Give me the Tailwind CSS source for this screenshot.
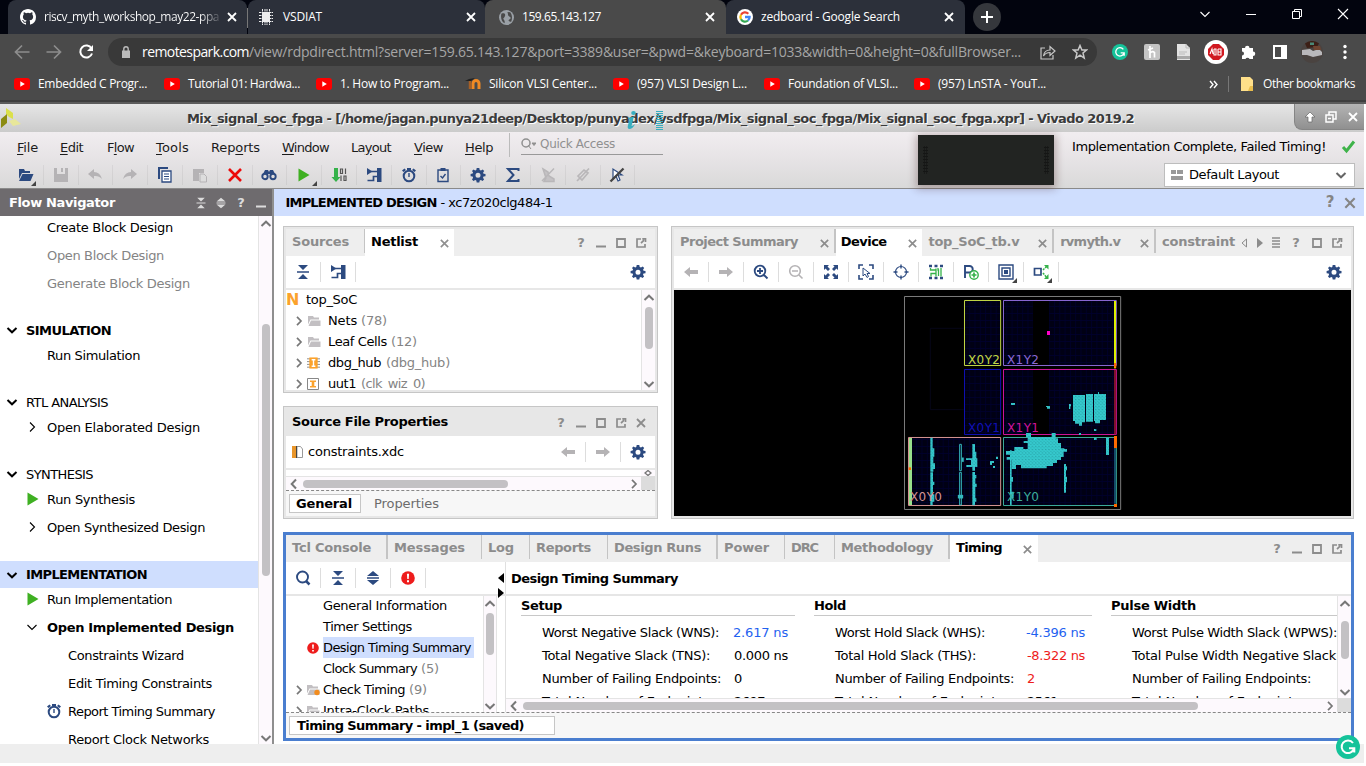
<!DOCTYPE html>
<html lang="en">
<head>
<meta charset="utf-8">
<title>Vivado 2019.2</title>
<script src="https://cdn.jsdelivr.net/npm/@tailwindcss/browser@4"></script>
</head>
<body class="w-[1366px] h-[766px] overflow-hidden bg-white font-['DejaVu_Sans',sans-serif] text-[13px] text-black whitespace-nowrap leading-none">

<svg class="hidden">
  <symbol id="x" viewBox="0 0 12 12"><path d="M2 2L10 10M10 2L2 10" fill="none" stroke="currentColor" stroke-width="1.8"/></symbol>
  <symbol id="min" viewBox="0 0 12 12"><path d="M1 9.500H11" stroke="currentColor" stroke-width="2"/></symbol>
  <symbol id="max" viewBox="0 0 12 12"><path d="M2 2H10V10H2z" fill="none" stroke="currentColor" stroke-width="1.8"/></symbol>
  <symbol id="float" viewBox="0 0 12 12"><path d="M6 2H2V10H10V7M6 6.2L9 3.200M7.300 1.800H10.500V5" fill="none" stroke="currentColor" stroke-width="1.700"/></symbol>
  <symbol id="dn" viewBox="0 0 12 12"><path d="M1.500 4L6 8.300L10.500 4" fill="none" stroke="currentColor" stroke-width="2"/></symbol>
  <symbol id="up" viewBox="0 0 12 12"><path d="M1.500 8L6 3.700L10.500 8" fill="none" stroke="currentColor" stroke-width="2"/></symbol>
  <symbol id="lt" viewBox="0 0 12 12"><path d="M8 1.500L3.700 6L8 10.500" fill="none" stroke="currentColor" stroke-width="2"/></symbol>
  <symbol id="rt" viewBox="0 0 12 12"><path d="M4 1.800L8 6L4 10.200" fill="none" stroke="currentColor" stroke-width="1.700"/></symbol>
  <symbol id="rt1" viewBox="0 0 12 12"><path d="M4 1.500L8.500 6L4 10.500" fill="none" stroke="currentColor" stroke-width="1.100"/></symbol>
  <symbol id="dn1" viewBox="0 0 12 12"><path d="M1.500 4L6 8.500L10.500 4" fill="none" stroke="currentColor" stroke-width="1.100"/></symbol>
  <symbol id="collapse" viewBox="0 0 16 16"><path d="M3 1H13L8 6zM2 7.200H14V8.800H2zM8 10L13 15H3z" fill="currentColor"/></symbol>
  <symbol id="expand" viewBox="0 0 16 16"><path d="M8 1L14 6H2zM2 7.200H14V8.800H2zM2 10H14L8 15z" fill="currentColor"/></symbol>
  <symbol id="gear" viewBox="0 0 16 16"><path fill="currentColor" fill-rule="evenodd" d="M6.700 1H9.300L9.700 3L11 3.500L12.700 2.400L14.200 4L13.100 5.600L13.500 6.700L15.500 7V9.200L13.500 9.600L13 10.800L14.100 12.500L12.500 14L10.900 12.900L9.700 13.400L9.300 15.400H6.700L6.300 13.400L5.200 12.900L3.500 14L2 12.500L3.100 10.800L2.600 9.600L.6 9.200V7L2.600 6.600L3.100 5.500L2 3.900L3.500 2.400L5.200 3.500L6.300 3zM8 5.700A2.500 2.500 0 1 0 8 10.700A2.500 2.500 0 1 0 8 5.700z"/></symbol>
  <symbol id="play" viewBox="0 0 12 14"><path d="M.5.500L11.500 7L.5 13.500z" fill="#3fb022"/></symbol>
  <symbol id="clock" viewBox="0 0 16 16"><circle cx="8" cy="9" r="5.300" fill="none" stroke="currentColor" stroke-width="2"/><path d="M6 1H10V3H6zM1 3.500L3.500 1.500L5 3L2.500 5zM15 3.500L12.500 1.500L11 3L13.500 5zM7.300 6H8.700V10H7.300z" fill="currentColor"/></symbol>
  <symbol id="sch" viewBox="0 0 16 16"><path d="M1 1L6.500 4.500L1 8zM11 1H15.500V15H11z" fill="currentColor"/><path d="M5 4.500H12M12 9.500H7.500V13.500H1.500" fill="none" stroke="currentColor" stroke-width="1.700"/></symbol>
  <symbol id="aL" viewBox="0 0 16 16"><path d="M1 8L7 3V6H15V10H7V13z" fill="currentColor"/></symbol>
  <symbol id="aR" viewBox="0 0 16 16"><path d="M15 8L9 3V6H1V10H9V13z" fill="currentColor"/></symbol>
  <symbol id="folder" viewBox="0 0 14 12"><path d="M1 1H6L7 2.500H12V4.500H3.500L1 9.500zM4 5.500H13.500V11H1.500z" fill="#c2bfc2"/></symbol>
  <symbol id="err" viewBox="0 0 14 14"><circle cx="7" cy="7" r="6.800" fill="#ee1c1c"/><path d="M5.900 2.800H8.100L7.700 8H6.300zM6 9.200H8V11.200H6z" fill="#fff"/></symbol>
  <symbol id="yt" viewBox="0 0 16 12"><rect width="16" height="12" rx="3" fill="#f00"/><path d="M6.300 3.300V8.700L10.800 6z" fill="#fff"/></symbol>
  <symbol id="dl" viewBox="0 0 6 6"><path d="M6 0V6H0z" fill="#444"/></symbol>
  <symbol id="g" viewBox="0 0 24 24"><circle cx="12" cy="12" r="12" fill="#15c39a"/><path d="M17 8A6.300 6.300 0 1 0 18 13.500M13 13.200H18.300V17.500" fill="none" stroke="#fff" stroke-width="2"/></symbol>
</svg>

<!-- browser chrome -->
<header class="font-['Open_Sans','Noto_Sans',sans-serif] text-white w-full h-[104px] flex flex-col bg-[#4a4a4a]">
  <div class="h-[34px] flex bg-[#02040e] text-[12px]">
    <div class="ml-2 w-[239px] h-[34px] rounded-t-lg bg-[#2c303a] flex items-center">
      <svg class="ml-[12px] w-4 h-4" viewBox="0 0 16 16"><path fill="#fff" d="M8 0C3.580 0 0 3.580 0 8c0 3.540 2.290 6.530 5.470 7.590.4.070.55-.17.55-.38v-1.490c-2.010.37-2.530-.49-2.690-.94-.09-.23-.48-.94-.82-1.130-.28-.15-.68-.52-.01-.53.63-.01 1.080.58 1.230.82.720 1.210 1.870.87 2.330.66.070-.52.280-.87.510-1.070-1.780-.2-3.640-.89-3.640-3.950 0-.87.310-1.590.82-2.150-.08-.2-.36-1.020.08-2.120 0 0 .67-.21 2.200.82a7.600 7.600 0 0 1 4 0c1.530-1.040 2.200-.82 2.200-.82.440 1.100.160 1.920.080 2.120.51.560.82 1.270.82 2.150 0 3.070-1.870 3.750-3.650 3.950.290.250.540.730.540 1.480v2.200c0 .21.150.460.550.38A8 8 0 0 0 16 8c0-4.420-3.580-8-8-8z"/></svg>
      <div class="ml-2 w-[177px] overflow-hidden h-5 leading-5 bg-linear-to-r from-white from-88% to-white/10 bg-clip-text text-transparent"><span data-w="175">riscv_myth_workshop_may22-ppa</span></div>
      <svg class="ml-[5px] w-3 h-3"><use href="#x"/></svg>
    </div>
    <div class="w-px h-[20px] mt-2 bg-[#777]"></div>
    <div class="w-[237px] h-[34px] rounded-t-lg bg-[#2c303a] flex items-center">
      <svg class="ml-[10px] w-4 h-4" viewBox="0 0 16 16" fill="#eee"><path d="M4 3H12V13H4z"/><path d="M1 3.500H15M1 6.500H15M1 9.500H15M1 12.500H15M4.500 0V16M7 0V16M9 0V16M11.500 0V16" stroke="#eee" stroke-width="1" stroke-dasharray="2 .5"/></svg>
      <span class="ml-[9px]" data-w="39">VSDIAT</span>
      <svg class="ml-auto mr-2 w-3 h-3"><use href="#x"/></svg>
    </div>
    <div class="w-[241px] h-[34px] rounded-t-lg bg-[#4a4a4a] flex items-center">
      <svg class="ml-[14px] w-[15px] h-[15px]" viewBox="0 0 16 16"><circle cx="8" cy="8" r="8" fill="#9aa0a6"/><path d="M2.500 4C5 3 7 3.500 6.500 6S3.500 8.500 5 10S6 13 6 14C3 13 1.500 9 2.500 4zM9 2C10 4 9 6 11 7S13 9 11 10S11 13 13 12.500C14.500 9 14 5 12 2.500z" fill="#4a4a4a"/></svg>
      <span class="ml-2" data-w="79">159.65.143.127</span>
      <svg class="ml-auto mr-[10px] w-3 h-3"><use href="#x"/></svg>
    </div>
    <div class="w-[239px] h-[34px] rounded-t-lg bg-[#2c303a] flex items-center">
      <svg class="ml-[11px] w-4 h-4" viewBox="0 0 16 16"><circle cx="8" cy="8" r="8" fill="#fff"/><g fill="none" stroke-width="2.300"><path d="M11.300 4.700A4.600 4.600 0 0 0 4 5.700" stroke="#ea4335"/><path d="M4 5.700A4.600 4.600 0 0 0 4 10.300" stroke="#fbbc05"/><path d="M4 10.300A4.600 4.600 0 0 0 11 11.500" stroke="#34a853"/><path d="M11 11.500A4.600 4.600 0 0 0 12.600 8H8" stroke="#4285f4"/></g></svg>
      <span class="ml-2" data-w="139">zedboard - Google Search</span>
      <svg class="ml-auto mr-[10px] w-3 h-3"><use href="#x"/></svg>
    </div>
    <div class="ml-2 mt-[3px] w-7 h-7 rounded-full bg-[#35373c] flex items-center justify-center"><svg class="w-3.5 h-3.5" viewBox="0 0 14 14"><path d="M7 1V13M1 7H13" stroke="#fff" stroke-width="2"/></svg></div>
    <div class="ml-auto flex h-7 items-center">
      <div class="w-[46px] flex justify-center"><svg class="w-3 h-3"><use href="#dn1"/></svg></div>
      <div class="w-[46px] flex justify-center"><svg class="w-3 h-3" viewBox="0 0 12 12"><path d="M1 6.500H11" stroke="#fff"/></svg></div>
      <div class="w-[46px] flex justify-center"><svg class="w-3 h-3" viewBox="0 0 12 12"><path d="M1.500 3.500H8.500V10.500H1.500zM3.500 3.500V1.500H10.500V8.500H8.500" fill="none" stroke="#fff"/></svg></div>
      <div class="w-[46px] flex justify-center"><svg class="w-3 h-3" viewBox="0 0 12 12"><path d="M1 1L11 11M11 1L1 11" stroke="#fff" stroke-width="1.100"/></svg></div>
    </div>
  </div>
  <div class="h-[36px] flex items-center">
    <svg class="ml-[14px] w-4 h-4 text-[#8d8d8d]" viewBox="0 0 16 16"><path d="M15.500 8H2M8 1.500L1.500 8L8 14.500" fill="none" stroke="currentColor" stroke-width="1.700"/></svg>
    <svg class="ml-4 w-4 h-4 text-[#8d8d8d]" viewBox="0 0 16 16"><path d="M.5 8H14M8 1.500L14.500 8L8 14.500" fill="none" stroke="currentColor" stroke-width="1.700"/></svg>
    <svg class="ml-4 w-4 h-4" viewBox="0 0 16 16"><path d="M13.500 4.500A6 6 0 1 0 14 9.500" fill="none" stroke="#fff" stroke-width="2"/><path d="M15 1V7H9z" fill="#fff"/></svg>
    <div class="ml-[14px] w-[989px] h-7 rounded-full bg-[#393939] flex items-center text-[14px]">
      <svg class="ml-[13px] w-[10px] h-3" viewBox="0 0 10 12"><path d="M1 4.500H9V12H1z" fill="#bbb"/><path d="M2.800 5V3A2.200 2.200 0 0 1 7.200 3V5" fill="none" stroke="#bbb" stroke-width="1.400"/></svg>
      <span class="ml-[11px]" data-w="107">remotespark.com</span><span class="text-[#a6a6a6]" data-w="772">/view/rdpdirect.html?server=159.65.143.127&amp;port=3389&amp;user=&amp;pwd=&amp;keyboard=1033&amp;width=0&amp;height=0&amp;fullBrowser...</span>
      <svg class="ml-[19px] w-4 h-4" viewBox="0 0 16 16"><path d="M5 4H1V15H13V11M3.500 12C4 8 6.500 6 10 6V2.500L15 7L10 11.500V8.500C7 8.500 5 9.500 3.500 12z" fill="none" stroke="#c8c8c8" stroke-width="1.200"/></svg>
      <svg class="ml-4 w-4 h-4" viewBox="0 0 16 16"><path d="M8 1.500L9.900 6H14.500L11 9L12.200 14L8 11.200L3.800 14L5 9L1.500 6H6.100z" fill="none" stroke="#c8c8c8" stroke-width="1.500"/></svg>
    </div>
    <svg class="ml-[15px] w-4 h-4"><use href="#g"/></svg>
    <svg class="ml-4 w-4 h-4" viewBox="0 0 16 16"><rect width="16" height="16" rx="2" fill="#c4c4c4"/><path d="M6 2V14M6 9Q8.500 6.500 10.500 8.500V13.500M4 6L9 4" fill="none" stroke="#fff" stroke-width="1.700"/></svg>
    <svg class="ml-4 w-[14px] h-4" viewBox="0 0 14 16"><path d="M1 0H10L14 4V16H1z" fill="#e3e3e3"/><path d="M1 12H14V15H1z" fill="#a9a9a9"/><path d="M10 0V4H14M3 8H11M3 10H9" stroke="#bbb" fill="none"/></svg>
    <div class="ml-[14px] w-6 h-6 rounded-full bg-white flex items-center justify-center"><svg class="w-4 h-4" viewBox="0 0 16 16"><path d="M5 0H11L16 5V11L11 16H5L0 11V5z" fill="#d01820"/><path d="M2 10L4 5L5 10M6 5V11H8V5H6M10 5V11H13V8H10M10 5H13V8" fill="none" stroke="#fff" stroke-width="1.100"/></svg></div>
    <svg class="ml-[12px] w-4 h-4" viewBox="0 0 16 16"><path d="M2 4H5A2.200 2.200 0 0 1 9.500 4H13V7.500A2.200 2.200 0 0 1 13 12V15H9.500A2.200 2.200 0 0 0 5.500 15H2V11.500A2 2 0 0 0 2 7.500z" fill="#fff"/></svg>
    <svg class="ml-4 w-4 h-4" viewBox="0 0 16 16"><path d="M2 2H14V14H2z" fill="none" stroke="#fff" stroke-width="2"/><path d="M9 2H14V14H9z" fill="#fff"/></svg>
    <svg class="ml-[13px] w-[22px] h-[22px]" viewBox="0 0 22 22"><circle cx="11" cy="11" r="11" fill="#4a4340"/><path d="M4 2.500A11 11 0 0 1 18 2.500L16 6L6 7z" fill="#3c1f16"/><path d="M9 1.500H13V4H9z" fill="#4a8a78"/><path d="M1 9L9 8L12 10L18 8L21 11V14L12 16L6 14L1 14z" fill="#b9b8bb"/><path d="M12 5L19 5L20 9L13 9z" fill="#6f4531"/></svg>
    <svg class="ml-[14px] w-4 h-4" viewBox="0 0 16 16" fill="#fff"><circle cx="8" cy="2.500" r="1.700"/><circle cx="8" cy="8" r="1.700"/><circle cx="8" cy="13.500" r="1.700"/></svg>
  </div>
  <div class="h-[32px] pb-[2px] flex items-center text-[12px] border-b-2 border-[#3e3e3e]">
    <div class="ml-[14px] w-[150px] flex items-center gap-2"><svg class="w-4 h-3"><use href="#yt"/></svg><span data-w="109">Embedded C Progr...</span></div>
    <div class="w-[152px] flex items-center gap-2"><svg class="w-4 h-3"><use href="#yt"/></svg><span data-w="112">Tutorial 01: Hardwa...</span></div>
    <div class="w-[149px] flex items-center gap-2"><svg class="w-4 h-3"><use href="#yt"/></svg><span data-w="109">1. How to Program...</span></div>
    <div class="w-[148px] flex items-center gap-2"><svg class="w-4 h-4" viewBox="0 0 16 16"><path d="M8 13V7.500A2.500 2.500 0 0 1 14 7.500V13" fill="none" stroke="#f08a24" stroke-width="3"/><path d="M5 5V13" stroke="#a65f25" stroke-width="2.500"/><path d="M0 5L4 3L10 2L6 5z" fill="#222"/></svg><span data-w="108">Silicon VLSI Center...</span></div>
    <div class="w-[151px] flex items-center gap-2"><svg class="w-4 h-3"><use href="#yt"/></svg><span data-w="110">(957) VLSI Design L...</span></div>
    <div class="w-[150px] flex items-center gap-2"><svg class="w-4 h-3"><use href="#yt"/></svg><span data-w="110">Foundation of VLSI...</span></div>
    <div class="flex items-center gap-2"><svg class="w-4 h-3"><use href="#yt"/></svg><span data-w="108">(957) LnSTA - YouT...</span></div>
    <svg class="ml-auto w-[9px] h-[9px]" viewBox="0 0 9 9"><path d="M1 1L4 4.500L1 8M5 1L8 4.500L5 8" fill="none" stroke="#fff" stroke-width="1.400"/></svg>
    <div class="ml-[10px] w-px h-4 bg-[#777]"></div>
    <svg class="ml-[12px] w-3 h-[14px]" viewBox="0 0 12 14"><path d="M0 0H9L12 3V14H0z" fill="#ffe08a"/><path d="M9 9H12V14H7z" fill="#e9bd4c"/></svg>
    <span class="ml-[10px] mr-[11px]" data-w="92">Other bookmarks</span>
  </div>
  <div class="h-[2px] bg-[#5c5c5c]"></div>
</header>

<div class="w-[1364px]">
  <!-- window title -->
  <div class="h-7 flex bg-linear-to-b from-[#e6e6e6] to-[#cbcbcb]">
    <svg class="mt-[3px] w-[22px] h-[22px]" viewBox="0 0 22 22"><path d="M6 1L13 6V12L9 10L6 7z" fill="#dbe04c"/><path d="M1 12L7 7V16L1 21z" fill="#8b8b12"/><path d="M9 14L15 12L21 17L13 19z" fill="#e8e79a"/></svg>
    <div class="ml-[165px] w-[1107px] leading-[29px] font-bold text-[#3b3b3b] [text-shadow:1px_1px_0_#fff] relative"><span data-w="947">Mix_signal_soc_fpga - [/home/jagan.punya21deep/Desktop/punyadex/vsdfpga/Mix_signal_soc_fpga/Mix_signal_soc_fpga.xpr] - Vivado 2019.2</span>
      <svg class="absolute left-[438px] top-[6px] w-4 h-5" viewBox="0 0 16 20"><ellipse cx="8.500" cy="3" rx="2.300" ry="2" fill="#38aebf"/><path d="M3 8L9 6.500L6.500 16Q8 16 10 14Q8 19 4 19Q2 18.500 3 15L4.500 9.500z" fill="#38aebf"/></svg>
      <svg class="absolute left-[469px] top-[7px] w-[7px] h-[19px]" viewBox="0 0 7 19"><path d="M3.500 0V19" stroke="#38aebf" stroke-width="7" stroke-dasharray="1 1"/></svg>
    </div>
    <div class="w-[70px] h-[26px] rounded-bl-lg bg-linear-to-b from-[#b4b4b4] to-[#909090] border-b border-l border-[#858585] flex items-center justify-around pl-1 text-white">
      <svg class="w-3 h-3" viewBox="0 0 12 12"><path d="M6 1L11 6H8V11H4V6H1z" fill="#fff" stroke="#666" stroke-width=".7"/></svg>
      <svg class="w-3 h-3" viewBox="0 0 12 12"><path d="M1 4H8V11H1zM4 4V1H11V8H8M3 7.500H6" fill="none" stroke="#fff" stroke-width="1.500"/></svg>
      <svg class="w-3 h-3"><use href="#x"/></svg>
    </div>
  </div>

  <!-- menu and toolbar -->
  <div class="relative h-[57px] flex bg-linear-to-b from-[#f1edf0] via-[#e6e3e5] to-[#d9d9d9] border-b border-[#8a8a8a]">
    <div class="w-[918px]">
      <div class="h-[30px] flex items-center text-[#1c1c1c] underline-offset-2">
        <div class="ml-[17px] w-[43px]"><span data-w="21"><u>F</u>ile</span></div>
        <div class="w-[47px]"><span data-w="23"><u>E</u>dit</span></div>
        <div class="w-[49px]"><span data-w="27">F<u>l</u>ow</span></div>
        <div class="w-[55px]"><span data-w="33"><u>T</u>ools</span></div>
        <div class="w-[71px]"><span data-w="49">Rep<u>o</u>rts</span></div>
        <div class="w-[69px]"><span data-w="47"><u>W</u>indow</span></div>
        <div class="w-[63px]"><span data-w="40">La<u>y</u>out</span></div>
        <div class="w-[51px]"><span data-w="29"><u>V</u>iew</span></div>
        <div class="w-[44px]"><span data-w="28"><u>H</u>elp</span></div>
        <div class="w-px h-6 bg-[#bbb] mb-1"></div>
        <div class="ml-[11px] mb-[5px] w-[142px] h-[20px] border-b border-[#999] flex items-center text-[12px] text-[#909090]">
          <svg class="w-[15px] h-3" viewBox="0 0 15 12"><circle cx="5" cy="5" r="4" fill="none" stroke="#909090" stroke-width="1.500"/><path d="M7 7L10 11M11 5H15L13 7.500z" stroke="#909090" stroke-width="1" fill="#909090"/></svg>
          <span class="ml-1" data-w="75">Quick Access</span>
        </div>
      </div>
      <div class="h-[26px] pl-[9px] flex items-center text-[#2c4a80]">
        <div class="w-[34.8px] h-5 border-r border-black/5 flex items-center justify-center relative"><svg class="w-4 h-4" viewBox="0 0 16 16"><path d="M1 2H6L7 4H12V6H4L1 12zM4.500 7H15.500L12.500 14H1z" fill="currentColor"/></svg><svg class="absolute right-[7px] -bottom-[1px] w-[5px] h-[5px]"><use href="#dl"/></svg></div>
        <div class="w-[34.8px] h-5 border-r border-black/5 flex items-center justify-center"><svg class="w-4 h-4" viewBox="0 0 16 16"><path fill-rule="evenodd" d="M1 1H15V15H1zM4 1V7H12V1H10V5H8V1z" fill="#b5b3b5"/></svg></div>
        <div class="w-[34.8px] h-5 border-r border-black/5 flex items-center justify-center"><svg class="w-4 h-4" viewBox="0 0 16 16"><path d="M1 7L7 2V5Q13 5 15 12Q12 8.500 7 9V12z" fill="#b5b3b5"/></svg></div>
        <div class="w-[34.8px] h-5 border-r border-black/5 flex items-center justify-center"><svg class="w-4 h-4" viewBox="0 0 16 16"><path d="M15 7L9 2V5Q3 5 1 12Q4 8.500 9 9V12z" fill="#b5b3b5"/></svg></div>
        <div class="w-[34.8px] h-5 border-r border-black/5 flex items-center justify-center"><svg class="w-4 h-4" viewBox="0 0 16 16"><path d="M2 12V1H11" fill="none" stroke="currentColor" stroke-width="2"/><path d="M5 4H14V15H5z" fill="#fff" stroke="currentColor" stroke-width="1.300"/><path d="M7 7H12M7 9.500H12M7 12H12" stroke="currentColor" stroke-width="1.200"/></svg></div>
        <div class="w-[34.8px] h-5 border-r border-black/5 flex items-center justify-center"><svg class="w-4 h-4" viewBox="0 0 16 16"><path d="M1 2H12V6H7V14H1z" fill="#b5b3b5"/><path d="M8 7H12L14.500 9.500V15H8z" fill="#ddd" stroke="#b5b3b5"/></svg></div>
        <div class="w-[34.8px] h-5 border-r border-black/5 flex items-center justify-center"><svg class="w-4 h-4" viewBox="0 0 16 16"><path d="M2 2L14 14M14 2L2 14" stroke="#ec0a0a" stroke-width="2.600"/></svg></div>
        <div class="w-[34.8px] h-5 border-r border-black/5 flex items-center justify-center"><svg class="w-4 h-4" viewBox="0 0 16 16"><path d="M4 3H7L8 5L9 3H12L14 7H2z" fill="currentColor"/><circle cx="4" cy="9.500" r="2.700" fill="none" stroke="currentColor" stroke-width="1.900"/><circle cx="12" cy="9.500" r="2.700" fill="none" stroke="currentColor" stroke-width="1.900"/></svg></div>
        <div class="w-[34.8px] h-5 border-r border-black/5 flex items-center justify-center relative"><svg class="w-3 h-[14px]"><use href="#play"/></svg><svg class="absolute right-[4px] -bottom-[1px] w-[5px] h-[5px]"><use href="#dl"/></svg></div>
        <div class="w-[34.8px] h-5 border-r border-black/5 flex items-center justify-center"><svg class="w-4 h-4" viewBox="0 0 16 16"><path d="M3 1H7V10H9.500L5 15L.5 10H3z" fill="#35b24a"/><path d="M9.500 2H11.500V6.500H9.500zM14.500 1.500V7M10 8.500V14M13 9H15V13.500H13z" fill="none" stroke="#555" stroke-width="1.200"/></svg></div>
        <div class="w-[34.8px] h-5 border-r border-black/5 flex items-center justify-center"><svg class="w-4 h-4"><use href="#sch"/></svg></div>
        <div class="w-[34.8px] h-5 border-r border-black/5 flex items-center justify-center"><svg class="w-4 h-4"><use href="#clock"/></svg></div>
        <div class="w-[34.8px] h-5 border-r border-black/5 flex items-center justify-center"><svg class="w-4 h-4" viewBox="0 0 16 16"><path d="M3 3H13V14.500H3zM5.500 9L7.500 11L10.500 7" fill="none" stroke="currentColor" stroke-width="1.400"/><path d="M5.500 1H10.500V4H5.500z" fill="currentColor"/></svg></div>
        <div class="w-[34.8px] h-5 border-r border-black/5 flex items-center justify-center"><svg class="w-4 h-4"><use href="#gear"/></svg></div>
        <div class="w-[34.8px] h-5 border-r border-black/5 flex items-center justify-center"><svg class="w-4 h-4" viewBox="0 0 16 16"><path d="M13.500 4V2H3L8.500 8L3 14H13.500V12" fill="none" stroke="currentColor" stroke-width="2"/></svg></div>
        <div class="w-[34.8px] h-5 border-r border-black/5 flex items-center justify-center"><svg class="w-4 h-4" viewBox="0 0 16 16"><path d="M3 2L8 5L9 9L14 12V14.500H4L6 11zM2 14L14 1.500" fill="#c4c2c4" stroke="#b9b7b9" stroke-width="1.500"/></svg></div>
        <div class="w-[34.8px] h-5 border-r border-black/5 flex items-center justify-center"><svg class="w-4 h-4" viewBox="0 0 16 16"><path d="M2 14L14 1.500M3 9L9 3L13 6L7 13z" fill="none" stroke="#b9b7b9" stroke-width="1.700"/></svg></div>
        <div class="w-[34.8px] h-5 border-r border-black/5 flex items-center justify-center"><svg class="w-4 h-4" viewBox="0 0 16 16"><path d="M4 2V12L7 9L9 14L11 13L9 8H13z" fill="#fff" stroke="#2c4a80" stroke-width="1.200"/><path d="M1.500 14.500L14.500 1.500" stroke="#444" stroke-width="2.300"/></svg></div>
      </div>
    </div>
    <div class="mt-[3px] w-[136px] h-[50px] bg-[#222422] shadow-[0_2px_8px_2px_rgba(60,20,20,0.3)] flex justify-between items-center px-[5px]">
      <div class="w-[5px] h-7 opacity-60 bg-[radial-gradient(#0c0c0c_1px,transparent_1px)] bg-[size:2.500px_3px]"></div>
      <div class="w-[5px] h-7 opacity-60 bg-[radial-gradient(#0c0c0c_1px,transparent_1px)] bg-[size:2.500px_3px]"></div>
    </div>
    <div class="flex-1 flex flex-col items-end pr-[9px]">
      <div class="h-[31px] pb-[2px] flex items-center">
        <span data-w="254">Implementation Complete, Failed Timing!</span>
        <svg class="ml-[15px] mr-[-2px] w-4 h-[14px]" viewBox="0 0 16 14"><path d="M2 7L5.500 11L13 1.500" fill="none" stroke="#3fb34a" stroke-width="3"/></svg>
      </div>
      <div class="w-[191px] h-6 border border-[#bdbdbd] bg-white flex items-center">
        <svg class="ml-[6px] w-3 h-[10px]" viewBox="0 0 12 10"><path d="M0 0H5V4H0zM6 0H12V4H6zM0 6H12V10H0z" fill="#999"/></svg>
        <span class="ml-[6px] mb-px" data-w="90">Default Layout</span>
        <svg class="ml-auto mr-[7px] w-3 h-3 text-[#666]"><use href="#dn"/></svg>
      </div>
    </div>
  </div>

  <div class="flex h-[555px]">
    <!-- flow navigator -->
    <aside class="w-[272px] flex flex-col">
      <div class="h-[27px] bg-[#6e6b6e] flex items-center text-white font-bold">
        <span class="ml-[9px]" data-w="106">Flow Navigator</span>
        <div class="ml-auto mr-[1px] flex items-center text-[#dcdcdc]">
          <div class="w-5 flex justify-center"><svg class="w-3 h-3"><use href="#collapse"/></svg></div>
          <div class="w-5 flex justify-center"><svg class="w-3 h-3"><use href="#expand"/></svg></div>
          <div class="w-5 text-center">?</div>
          <div class="w-5 flex justify-center"><svg class="w-3 h-3"><use href="#min"/></svg></div>
        </div>
      </div>
      <div class="h-[528px] flex overflow-hidden">
        <div class="w-[258px] -mt-[3px]">
          <div class="h-7 flex items-center pl-[47px]"><span data-w="126">Create Block Design</span></div>
          <div class="h-7 flex items-center pl-[47px] text-[#848484]"><span data-w="117">Open Block Design</span></div>
          <div class="h-7 flex items-center pl-[47px] text-[#848484]"><span data-w="143">Generate Block Design</span></div>
          <div class="mt-[22px] h-[22px] flex items-center font-bold"><svg class="ml-[6px] mr-2 w-3 h-3"><use href="#dn"/></svg><span data-w="85">SIMULATION</span></div>
          <div class="h-7 flex items-center pl-[47px]"><span data-w="93">Run Simulation</span></div>
          <div class="mt-[22px] h-[22px] flex items-center"><svg class="ml-[6px] mr-2 w-3 h-3"><use href="#dn"/></svg><span data-w="82">RTL ANALYSIS</span></div>
          <div class="h-7 flex items-center"><svg class="ml-[26px] mr-[9px] w-3 h-3"><use href="#rt1"/></svg><span data-w="153">Open Elaborated Design</span></div>
          <div class="mt-[22px] h-[22px] flex items-center"><svg class="ml-[6px] mr-2 w-3 h-3"><use href="#dn"/></svg><span data-w="67">SYNTHESIS</span></div>
          <div class="h-7 flex items-center"><svg class="ml-[27px] mr-2 w-3 h-[14px]"><use href="#play"/></svg><span data-w="88">Run Synthesis</span></div>
          <div class="h-7 flex items-center"><svg class="ml-[26px] mr-[9px] w-3 h-3"><use href="#rt1"/></svg><span data-w="158">Open Synthesized Design</span></div>
          <div class="mt-5 h-[27px] bg-[#cfdefe] flex items-center font-bold"><svg class="ml-[6px] mr-2 w-3 h-3"><use href="#dn"/></svg><span data-w="121">IMPLEMENTATION</span></div>
          <div class="-mt-[3px] h-7 flex items-center"><svg class="ml-[27px] mr-2 w-3 h-[14px]"><use href="#play"/></svg><span data-w="125">Run Implementation</span></div>
          <div class="h-7 flex items-center font-bold"><svg class="ml-[26px] mr-[9px] w-3 h-3"><use href="#dn1"/></svg><span data-w="187">Open Implemented Design</span></div>
          <div class="h-7 flex items-center pl-[68px]"><span data-w="116">Constraints Wizard</span></div>
          <div class="h-7 flex items-center pl-[68px]"><span data-w="144">Edit Timing Constraints</span></div>
          <div class="h-7 flex items-center"><svg class="ml-[46px] mr-[6px] w-4 h-4 text-[#2c4a80]"><use href="#clock"/></svg><span data-w="147">Report Timing Summary</span></div>
          <div class="h-7 flex items-center pl-[68px]"><span data-w="141">Report Clock Networks</span></div>
        </div>
        <div class="w-[14px] h-full bg-[#fdf9fd] border-l border-[#e4e4e4] flex flex-col items-center text-[#777]">
          <svg class="mt-[2px] w-3 h-3"><use href="#up"/></svg>
          <div class="mt-[94px] w-2 h-[252px] rounded-full bg-[#c3c1c4]"></div>
          <svg class="mt-auto mb-0 w-3 h-3"><use href="#dn"/></svg>
        </div>
      </div>
    </aside>
    <div class="w-[1.500px] bg-[#8f8f8f]"></div>

    <main class="flex-1 flex flex-col">
      <div class="h-[27px] bg-[#cfdefe] flex items-center">
        <span class="ml-[12px] font-bold" data-w="151">IMPLEMENTED DESIGN</span><span class="ml-1" data-w="112">- xc7z020clg484-1</span>
        <div class="ml-auto mr-1 flex items-center text-[#858585] font-bold"><div class="w-5 text-center text-[15px]">?</div><div class="w-5 flex justify-center"><svg class="w-[14px] h-[14px]"><use href="#x"/></svg></div></div>
      </div>
      <div class="mt-[10px] ml-[9.500px] flex gap-[13px] h-[293px]">
        <div class="w-[375px] flex flex-col gap-[13px]">
          <!-- netlist -->
          <section class="h-[167px] border border-[#c6c6c6] p-[2px] bg-[#e7e7e7] flex flex-col">
            <div class="h-[27px] bg-[#eee] flex items-center font-bold">
              <div class="w-[79px] pl-[6px] text-[#8c8c8c] border-r border-[#c4c4c4] h-6 leading-[25px] mb-[3px]"><span data-w="57">Sources</span></div>
              <div class="w-[89px] h-full bg-white pl-[6px] flex items-center"><span class="mb-[2px]" data-w="47">Netlist</span><svg class="ml-[21px] mt-[2px] w-[11px] h-[11px] text-[#909090]"><use href="#x"/></svg></div>
              <div class="ml-auto mr-1 flex items-center text-[#8c8c8c]"><div class="w-5 text-center">?</div><div class="w-5 flex justify-center"><svg class="w-3 h-3"><use href="#min"/></svg></div><div class="w-5 flex justify-center"><svg class="w-3 h-3"><use href="#max"/></svg></div><div class="w-5 flex justify-center"><svg class="w-3 h-3"><use href="#float"/></svg></div></div>
            </div>
            <div class="h-[32px] bg-white flex items-center text-[#2c4a80]">
              <div class="w-[35px] h-5 border-r border-[#ddd] flex items-center justify-center"><svg class="w-4 h-4"><use href="#collapse"/></svg></div>
              <div class="w-[35px] h-5 border-r border-[#ddd] flex items-center justify-center"><svg class="w-4 h-4"><use href="#sch"/></svg></div>
              <div class="ml-auto w-[34px] flex justify-center"><svg class="w-4 h-4"><use href="#gear"/></svg></div>
            </div>
            <div class="mt-[2px] h-[100px] bg-white flex overflow-hidden">
              <div class="flex-1 -mt-px">
                <div class="h-[21px] flex items-center"><span class="w-[20px] text-[16px] font-bold text-[#fba22c]">N</span><span data-w="51">top_SoC</span></div>
                <div class="h-[21px] flex items-center"><svg class="ml-[7px] w-3 h-3 text-[#777]"><use href="#rt"/></svg><svg class="ml-[2px] w-[14px] h-3"><use href="#folder"/></svg><span class="ml-[7px]" data-w="29">Nets</span><span class="ml-1 text-[#848484]" data-w="26">(78)</span></div>
                <div class="h-[21px] flex items-center"><svg class="ml-[7px] w-3 h-3 text-[#777]"><use href="#rt"/></svg><svg class="ml-[2px] w-[14px] h-3"><use href="#folder"/></svg><span class="ml-[7px]" data-w="59">Leaf Cells</span><span class="ml-1 text-[#848484]" data-w="26">(12)</span></div>
                <div class="h-[21px] flex items-center"><svg class="ml-[7px] w-3 h-3 text-[#777]"><use href="#rt"/></svg><svg class="ml-[2px] w-[13px] h-3" viewBox="0 0 14 12"><path d="M0 1.500H14M0 4.500H14M0 7.500H14M0 10.500H14" stroke="#888"/><path d="M2.500 0H11.500V12H2.500z" fill="#fba22c"/><path d="M5 2.500H9M5 9.500H9M7 3V9" stroke="#fff" stroke-width="1.500"/></svg><span class="ml-2" data-w="53">dbg_hub</span><span class="ml-[5px] text-[#848484]" data-w="64">(dbg_hub)</span></div>
                <div class="h-[21px] flex items-center"><svg class="ml-[7px] w-3 h-3 text-[#777]"><use href="#rt"/></svg><svg class="ml-[2px] w-3 h-3" viewBox="0 0 12 12"><path d="M.5.500H11.500V11.500H.5z" fill="#fff" stroke="#888"/><path d="M3 2.500H9V4H7.300V8H9V9.500H3V8H4.700V4H3z" fill="#fba22c"/></svg><span class="ml-[9px]" data-w="28">uut1</span><span class="ml-[5px] text-[#848484]" data-w="64">(clk_wiz_0)</span></div>
              </div>
              <div class="w-[14px] bg-[#fdf9fd] border-l border-[#e4e4e4] flex flex-col items-center text-[#777]">
                <svg class="mt-[2px] w-3 h-3"><use href="#up"/></svg>
                <div class="mt-[3px] w-2 h-[42px] rounded-full bg-[#c3c1c4]"></div>
                <svg class="mt-auto w-3 h-3"><use href="#dn"/></svg>
              </div>
            </div>
          </section>
          <!-- source file properties -->
          <section class="h-[113px] border border-[#c6c6c6] bg-[#e7e7e7] p-[2px] flex flex-col">
            <div class="h-[27px] flex items-center font-bold">
              <span class="ml-[6px] mb-[2px]" data-w="156">Source File Properties</span>
              <div class="ml-auto mr-1 flex items-center text-[#8c8c8c]"><div class="w-5 text-center">?</div><div class="w-5 flex justify-center"><svg class="w-3 h-3"><use href="#min"/></svg></div><div class="w-5 flex justify-center"><svg class="w-3 h-3"><use href="#max"/></svg></div><div class="w-5 flex justify-center"><svg class="w-3 h-3"><use href="#float"/></svg></div><div class="w-5 flex justify-center"><svg class="w-3 h-3"><use href="#x"/></svg></div></div>
            </div>
            <div class="h-[32px] bg-white flex items-center">
              <svg class="ml-[6px] w-[11px] h-3" viewBox="0 0 11 12"><path d="M5 .5H8.500L10.500 3V11.500H5z" fill="#fff" stroke="#999"/><path d="M0 0H4V12H0z" fill="#e8952a"/><path d="M4.500 0V12" stroke="#444"/></svg>
              <span class="ml-[5px] mb-px" data-w="96">constraints.xdc</span>
              <div class="ml-auto flex items-center text-[#b5b3b5]">
                <div class="w-[35px] h-5 border-r border-[#ddd] flex items-center justify-center"><svg class="w-4 h-4"><use href="#aL"/></svg></div>
                <div class="w-[35px] h-5 border-r border-[#ddd] flex items-center justify-center"><svg class="w-4 h-4"><use href="#aR"/></svg></div>
                <div class="w-[34px] flex justify-center text-[#2c4a80]"><svg class="w-4 h-4"><use href="#gear"/></svg></div>
              </div>
            </div>
            <div class="mt-[2px] h-[6px] bg-white flex justify-end"><div class="w-[14px] bg-[#fdf9fd] flex justify-center"><svg class="w-[8px] h-[6px]" viewBox="0 0 8 6"><path d="M1 3L4 .5L7 3L4 5.500z" fill="none" stroke="#777" stroke-width="1.300"/></svg></div></div>
            <div class="h-[14px] flex text-[#777]">
              <div class="flex-1 bg-[#fdf9fd] border-t border-[#e4e4e4] flex items-center pl-[2px] pr-[1px]"><svg class="w-3 h-3"><use href="#lt"/></svg><div class="ml-[3px] w-[205px] h-2 rounded-full bg-[#c3c1c4]"></div><svg class="ml-auto w-3 h-3"><use href="#rt"/></svg></div>
              <div class="w-[14px] bg-[#dcdcdc]"></div>
            </div>
            <div class="h-[26px] bg-[#f7f7f7] border-t border-dashed border-[#888] flex items-center">
              <div class="ml-[3px] w-[72px] h-[19px] border border-[#c6c6c6] bg-white pl-[6px] leading-[18px] font-bold"><span data-w="56">General</span></div>
              <span class="ml-[13px] text-[#6c6c6c]" data-w="65">Properties</span>
            </div>
          </section>
        </div>
        <!-- device -->
        <section class="w-[683px] border border-[#c6c6c6] bg-[#e7e7e7] p-[2px] flex flex-col">
          <div class="h-[27px] bg-[#eee] flex items-center font-bold text-[#8c8c8c]">
            <div class="w-[162px] h-6 mb-[3px] border-r-2 border-[#c4c4c4] pl-[6px] flex items-center"><span data-w="118">Project Summary</span><svg class="ml-[21px] mt-[4px] w-[11px] h-[11px]"><use href="#x"/></svg></div>
            <div class="w-[87px] h-full bg-white pl-[5px] flex items-center"><span class="text-black mb-[2px]" data-w="46">Device</span><svg class="ml-[20px] mt-[2px] w-[11px] h-[11px]"><use href="#x"/></svg></div>
            <div class="w-[132px] h-6 mb-[3px] border-r-2 border-[#c4c4c4] pl-[6px] flex items-center"><span data-w="91">top_SoC_tb.v</span><svg class="ml-[18px] mt-[4px] w-[11px] h-[11px]"><use href="#x"/></svg></div>
            <div class="w-[102px] h-6 mb-[3px] border-r-2 border-[#c4c4c4] pl-[6px] flex items-center"><span data-w="60">rvmyth.v</span><svg class="ml-[19px] mt-[4px] w-[11px] h-[11px]"><use href="#x"/></svg></div>
            <span class="ml-[6px] mb-[2px]" data-w="73">constraint</span>
            <div class="ml-auto mr-1 flex items-center">
              <div class="w-[17px] flex justify-center"><svg class="w-[6px] h-[10px]" viewBox="0 0 6 10"><path d="M5.500 1V9L1 5z" fill="none" stroke="#8c8c8c"/></svg></div>
              <div class="w-[15px] flex justify-center"><svg class="w-[6px] h-[10px]" viewBox="0 0 6 10"><path d="M0 0V10L6 5z" fill="#8c8c8c"/></svg></div>
              <div class="w-[18px] flex justify-center"><svg class="w-2 h-[11px]" viewBox="0 0 8 11"><path d="M0 1H8M0 4H8M0 7H8M0 10H8" stroke="#8c8c8c" stroke-width="1.500"/></svg></div>
              <div class="w-[22px] text-center">?</div><div class="w-5 flex justify-center"><svg class="w-3 h-3"><use href="#max"/></svg></div><div class="w-5 flex justify-center"><svg class="w-3 h-3"><use href="#float"/></svg></div></div>
          </div>
          <div class="h-[32px] bg-white flex items-center text-[#2c4a80]">
            <div class="w-[35px] h-5 border-r border-[#ddd] flex items-center justify-center text-[#b5b3b5]"><svg class="w-4 h-4"><use href="#aL"/></svg></div>
            <div class="w-[35px] h-5 border-r border-[#ddd] flex items-center justify-center text-[#b5b3b5]"><svg class="w-4 h-4"><use href="#aR"/></svg></div>
            <div class="w-[35px] h-5 border-r border-[#ddd] flex items-center justify-center"><svg class="w-4 h-4" viewBox="0 0 16 16"><circle cx="7" cy="7" r="5.300" fill="none" stroke="currentColor" stroke-width="1.800"/><path d="M11 11L14.500 14.500M4 7H10M7 4V10" stroke="currentColor" stroke-width="1.800"/></svg></div>
            <div class="w-[35px] h-5 border-r border-[#ddd] flex items-center justify-center text-[#b5b3b5]"><svg class="w-4 h-4" viewBox="0 0 16 16"><circle cx="7" cy="7" r="5.300" fill="none" stroke="currentColor" stroke-width="1.600"/><path d="M11 11L14.500 14.500M4 7H10" stroke="currentColor" stroke-width="1.600"/></svg></div>
            <div class="w-[35px] h-5 border-r border-[#ddd] flex items-center justify-center"><svg class="w-4 h-4" viewBox="0 0 16 16"><path d="M1 1H6L4.500 2.500L7 5L5 7L2.500 4.500L1 6zM15 1V6L13.500 4.500L11 7L9 5L11.500 2.500L10 1zM1 15V10L2.500 11.500L5 9L7 11L4.500 13.500L6 15zM15 15H10L11.500 13.500L9 11L11 9L13.500 11.500L15 10z" fill="currentColor"/></svg></div>
            <div class="w-[35px] h-5 border-r border-[#ddd] flex items-center justify-center"><svg class="w-4 h-4" viewBox="0 0 16 16"><path d="M1 5V1H5M11 1H15V5M15 11V15H11M5 15H1V11" fill="none" stroke="currentColor" stroke-width="1.600"/><path d="M5 4V12L7 10L9 13.500L10.500 12.500L9 9.500H12z" fill="#fff" stroke="currentColor" stroke-width="1"/></svg></div>
            <div class="w-[35px] h-5 border-r border-[#ddd] flex items-center justify-center"><svg class="w-4 h-4" viewBox="0 0 16 16"><circle cx="8" cy="8" r="5.500" fill="none" stroke="currentColor" stroke-width="1.200"/><path d="M8 .5V4.500M8 11.500V15.500M.5 8H4.500M11.500 8H15.500" stroke="currentColor" stroke-width="1.400"/></svg></div>
            <div class="w-[35px] h-5 border-r border-[#ddd] flex items-center justify-center"><svg class="w-4 h-4" viewBox="0 0 16 16"><path d="M1 2H4M6.500 2H9.500M12 2H15M1 14H4M6.500 14H9.500M12 14H15" stroke="currentColor" stroke-width="2.600"/><path d="M2.500 4V6H8V9.500H3V12.500M8 9.500V12.500M10 4V6H10.500V12M13 4V12.500M8 6V4.500" fill="none" stroke="#35b24a" stroke-width="1.300"/></svg></div>
            <div class="w-[35px] h-5 border-r border-[#ddd] flex items-center justify-center"><svg class="w-4 h-4" viewBox="0 0 16 16"><path d="M2 14V2H6.500A3 3 0 0 1 6.500 8.500H2" fill="none" stroke="currentColor" stroke-width="1.900"/><circle cx="11" cy="11" r="4.200" fill="#fff" stroke="#35b24a" stroke-width="1.400"/><path d="M11 8.500V13.500M8.500 11H13.500" stroke="#35b24a" stroke-width="1.700"/></svg></div>
            <div class="relative w-[35px] h-5 border-r border-[#ddd] flex items-center justify-center"><svg class="w-4 h-4" viewBox="0 0 16 16"><path d="M1 1H15V15H1zM4 4H12V12H4z" fill="none" stroke="currentColor" stroke-width="1.400"/><path d="M6 6H10V10H6z" fill="currentColor"/></svg><svg class="absolute right-[6px] -bottom-[1px] w-[5px] h-[5px]"><use href="#dl"/></svg></div>
            <div class="relative w-[35px] h-5 border-r border-[#ddd] flex items-center justify-center"><svg class="w-4 h-4" viewBox="0 0 16 16"><path d="M1.500 4.500H8V11H1.500z" fill="none" stroke="currentColor" stroke-width="1.700"/><path d="M11 1H15.500V5.500zM15.500 10V15H11z" fill="#35b24a"/><path d="M10 6L14 2M10 9L14 14" stroke="#35b24a" stroke-width="1.500" stroke-dasharray="2 1"/></svg><svg class="absolute right-[6px] -bottom-[1px] w-[5px] h-[5px]"><use href="#dl"/></svg></div>
            <div class="ml-auto w-[34px] flex justify-center"><svg class="w-4 h-4"><use href="#gear"/></svg></div>
          </div>
          <div class="mt-[2px] h-[226px] bg-black">
            <svg class="w-[677px] h-[226px]" viewBox="674 290 677 226">
              <defs>
                <pattern id="fab" width="15.900" height="21" patternUnits="userSpaceOnUse"><rect width="15.900" height="21" fill="#000014"/><path d="M1.500 0V21M0 1.500H15.900" stroke="#00002c" stroke-width="2.500"/></pattern>
                <pattern id="cell" width="10" height="10" patternUnits="userSpaceOnUse"><rect width="10" height="10" fill="#35c9cd"/><path d="M0 3.500H3V6M6 9H9" stroke="#1e8088" stroke-width="1.500" fill="none"/></pattern>
              </defs>
              <g transform="translate(895 285) scale(.33333)" fill="none" stroke-width="3">
                <path d="M106 374V130H207M106 374H207" stroke="#060618"/>
                <path d="M28.500 34.500H677V673.500H28.500z" stroke="#7c7c7c"/>
                <g fill="url(#fab)" stroke="none"><path d="M208 46H317V241H208zM326 46H414V241H326zM462 46H660V241H462zM208 254H317V448H208zM326 254H414V448H326zM462 254H660V448H462zM41 458H317V661H41zM326 458H660V661H326z"/></g>
                <path d="M208.500 46.500H317V241.500H208.500z" stroke="#c3d844"/>
                <path d="M325.500 46.500H664V241.500H325.500z" stroke="#8a68d4"/>
                <path d="M208.500 253.500H317V448.500H208.500z" stroke="#1010b4"/>
                <path d="M325.500 253.500H664V448.500H325.500z" stroke="#d0149c"/>
                <path d="M40.500 457.500H317V661.500H40.500z" stroke="#d69494"/>
                <path d="M325.500 457.500H664V661.500H325.500z" stroke="#3cae9c"/>
                <g stroke="none">
                  <path d="M657 48H663V250H657z" fill="#e0f000"/><path d="M657 234H664V248H657z" fill="#ff6a00"/>
                  <path d="M657 255H663V448H657z" fill="#80102c"/><path d="M657 453H666V489H657zM657 657H666V666H657z" fill="#ff6a00"/>
                  <path d="M657 489H663V656H657z" fill="#124c68"/><path d="M42 459H51V660H42z" fill="#98e08a"/><path d="M41 547H48V555H41z" fill="#ff6a00"/>
                  <path d="M456 138H465V150H456z" fill="#ff00c8"/>
                </g>
                <g fill="url(#cell)" stroke="none">
                  <path d="M534 330H570V412H561V422H552V416H540V408H534zM573 327H594V410H573zM597 327H609V321H612V327H633V405H615V415H600V408H597z"/>
                  <path d="M348 354H360V360H348zM453 363H465V371H456V366H453zM522 357H528V364H526V372H522zM597 432H604V438H597zM597 458H605V465H597zM552 444H558V450H552zM633 458H642V510H633z"/>
                  <path d="M393 444H408V456H470V444H482V460H489V474H498V490H508V492H516V500H506V516H498V525H486V534H474V543H455V550H378V540H363V552H350V524H335V516H345V509H333V498H358V486H385V492H398V474H386V468H398V456H393z"/>
                  <path d="M345 496H350V660H345zM350 576H354V590H350zM350 620H356V640H350zM507 537H513V623H507zM513 544H516V556H513zM513 575H516V592H513z"/>
                  <path d="M106 458H113V490H118V515H115V535H120V552H115V560H106zM106 562H114V590H118V600H114V628H118V650H113V661H106z"/>
                  <path d="M232 477H240V500H244V520H247V546H240V557H232V546H214V540H228V525H213V520H232zM232 561H240V570H244V580H241V596H245V606H241V640H244V650H240V661H232z"/>
                  <path d="M303 515H309V522H303zM285 528H297V534H291V540H285zM294 543H300V549H294z"/>
                </g>
                <path d="M194 478H199V557H194zM194 562H199V660H194z" stroke="#35b9be"/><path d="M189 630H204V640H189zM201 518H206V530H201z" stroke="#35b9be" stroke-width="1" fill="#35b9be"/>
              </g>
              <g font-family="DejaVu Sans" font-size="12">
                <text x="968" y="364" textLength="32" fill="#c3d844">X0Y2</text>
                <text x="1007" y="364" textLength="32" fill="#8a68d4">X1Y2</text>
                <text x="968" y="432" textLength="32" fill="#1010b4">X0Y1</text>
                <text x="1007" y="432" textLength="32" fill="#d0149c">X1Y1</text>
                <text x="910" y="501" textLength="32" fill="#d69494">X0Y0</text>
                <text x="1007" y="501" textLength="32" fill="#3cae9c">X1Y0</text>
              </g>
            </svg>
          </div>
        </section>
      </div>

      <!-- timing -->
      <section class="mt-[13px] ml-[9.500px] w-[1071px] h-[209px] border-[3px] border-[#4a7ecf] flex flex-col">
        <div class="h-[27px] bg-[#eee] flex items-center font-bold text-[#8c8c8c]">
          <div class="w-[102px] h-6 leading-[25px] mb-[3px] border-r-2 border-[#c4c4c4] pl-[6px]"><span data-w="79">Tcl Console</span></div>
          <div class="w-[94px] h-6 leading-[25px] mb-[3px] border-r border-[#c4c4c4] pl-[6px]"><span data-w="71">Messages</span></div>
          <div class="w-[48px] h-6 leading-[25px] mb-[3px] border-r border-[#c4c4c4] pl-[6px]"><span data-w="26">Log</span></div>
          <div class="w-[78px] h-6 leading-[25px] mb-[3px] border-r border-[#c4c4c4] pl-[6px]"><span data-w="55">Reports</span></div>
          <div class="w-[110px] h-6 leading-[25px] mb-[3px] border-r-2 border-[#c4c4c4] pl-[6px]"><span data-w="87">Design Runs</span></div>
          <div class="w-[67px] h-6 leading-[25px] mb-[3px] border-r border-[#c4c4c4] pl-[6px]"><span data-w="45">Power</span></div>
          <div class="w-[50px] h-6 leading-[25px] mb-[3px] border-r border-[#c4c4c4] pl-[6px]"><span data-w="27">DRC</span></div>
          <div class="w-[115px] h-6 leading-[25px] mb-[3px] border-r-2 border-[#c4c4c4] pl-[6px]"><span data-w="92">Methodology</span></div>
          <div class="w-[88px] h-full bg-white pl-[6px] flex items-center"><span class="text-black mb-[2px]" data-w="46">Timing</span><svg class="ml-[20px] mt-[2px] w-[11px] h-[11px]"><use href="#x"/></svg></div>
          <div class="ml-auto mr-1 flex items-center"><div class="w-5 text-center">?</div><div class="w-5 flex justify-center"><svg class="w-3 h-3"><use href="#min"/></svg></div><div class="w-5 flex justify-center"><svg class="w-3 h-3"><use href="#max"/></svg></div><div class="w-5 flex justify-center"><svg class="w-3 h-3"><use href="#float"/></svg></div></div>
        </div>
        <div class="h-[34px] flex border-b-2 border-[#e6e6e6]">
          <div class="w-[211px] flex items-center text-[#2c4a80]">
            <div class="w-[35px] h-5 border-r border-[#ddd] flex items-center justify-center"><svg class="w-4 h-4" viewBox="0 0 16 16"><circle cx="7.500" cy="7" r="5.500" fill="none" stroke="currentColor" stroke-width="1.900"/><path d="M11 11L14.500 14.500" stroke="currentColor" stroke-width="2.500"/></svg></div>
            <div class="w-[35px] h-5 border-r border-[#ddd] flex items-center justify-center"><svg class="w-4 h-4"><use href="#collapse"/></svg></div>
            <div class="w-[35px] h-5 border-r border-[#ddd] flex items-center justify-center"><svg class="w-4 h-4"><use href="#expand"/></svg></div>
            <div class="w-[35px] h-5 border-r border-[#ddd] flex items-center justify-center"><svg class="w-[14px] h-[14px]"><use href="#err"/></svg></div>
          </div>
          <div class="w-2 flex flex-col items-center pt-[11px]">
            <svg class="w-[6px] h-[10px] shrink-0" viewBox="0 0 6 10"><path d="M6 0V10L0 5z"/></svg>
            <svg class="mt-[5px] w-[6px] h-[10px] shrink-0" viewBox="0 0 6 10"><path d="M0 0V10L6 5z"/></svg>
          </div>
          <div class="flex-1 border-l border-[#e0e0e0] flex items-center font-bold pl-[5px]"><span data-w="167">Design Timing Summary</span></div>
        </div>
        <div class="h-[116px] flex overflow-hidden">
          <div class="w-[197px] -mt-px">
            <div class="h-[21px] leading-[21px] pl-[37px]"><span data-w="124">General Information</span></div>
            <div class="h-[21px] leading-[21px] pl-[37px]"><span data-w="89">Timer Settings</span></div>
            <div class="h-[21px] flex items-center"><svg class="ml-[21px] mr-1 w-3 h-3"><use href="#err"/></svg><div class="w-[151px] h-[21px] leading-[21px] bg-[#cfdefe]"><span data-w="148">Design Timing Summary</span></div></div>
            <div class="h-[21px] leading-[21px] pl-[37px]"><span data-w="94">Clock Summary</span><span class="ml-1 text-[#848484]" data-w="18">(5)</span></div>
            <div class="h-[21px] flex items-center"><svg class="ml-[7px] w-3 h-3 text-[#777]"><use href="#rt"/></svg><svg class="ml-[1px] w-[14px] h-3" viewBox="0 0 14 12"><path d="M1 1H6L7 2.500H12V4.500H3.500L1 9.500zM4 5.500H13.500V11H1.500z" fill="#c2bfc2"/><circle cx="11" cy="8.500" r="2.700" fill="#f28c1e"/></svg><span class="ml-[3px]" data-w="82">Check Timing</span><span class="ml-1 text-[#848484]" data-w="18">(9)</span></div>
            <div class="h-[21px] flex items-center"><svg class="ml-[7px] w-3 h-3 text-[#777]"><use href="#rt"/></svg><svg class="ml-[1px] w-[14px] h-3"><use href="#folder"/></svg><span class="ml-[3px]" data-w="106">Intra-Clock Paths</span></div>
          </div>
          <div class="w-[14px] bg-[#fdf9fd] border-x border-[#e4e4e4] flex flex-col items-center text-[#777]">
            <svg class="mt-[2px] w-3 h-3"><use href="#up"/></svg>
            <div class="mt-[3px] w-2 h-[42px] rounded-full bg-[#c3c1c4]"></div>
            <svg class="mt-auto w-3 h-3"><use href="#dn"/></svg>
          </div>
          <div class="ml-2 flex-1 border-l border-[#e0e0e0] flex flex-col">
            <div class="h-[102px] flex">
              <div class="w-[831px] pl-[15px] flex overflow-hidden">
                <div class="w-[274px] mr-[19px] shrink-0">
                  <div class="h-5 leading-[19px] font-bold border-b border-[#c8c8c8] mb-[5px]"><span data-w="41">Setup</span></div>
                  <div class="grid grid-cols-[191px_1fr] pl-[21px] leading-[23px]">
                    <div><span data-w="177">Worst Negative Slack (WNS):</span></div><div class="text-[#1f62f0]"><span data-w="55">2.617 ns</span></div>
                    <div><span data-w="168">Total Negative Slack (TNS):</span></div><div class="pl-px"><span data-w="54">0.000 ns</span></div>
                    <div><span data-w="179">Number of Failing Endpoints:</span></div><div class="pl-px">0</div>
                    <div><span data-w="172">Total Number of Endpoints:</span></div><div class="pl-px"><span data-w="31">2697</span></div>
                  </div>
                </div>
                <div class="w-[278px] mr-[19px] shrink-0">
                  <div class="h-5 leading-[19px] font-bold border-b border-[#c8c8c8] mb-[5px]"><span data-w="32">Hold</span></div>
                  <div class="grid grid-cols-[191px_1fr] pl-[21px] leading-[23px]">
                    <div><span data-w="150">Worst Hold Slack (WHS):</span></div><div class="text-[#1f62f0]"><span data-w="59">-4.396 ns</span></div>
                    <div><span data-w="141">Total Hold Slack (THS):</span></div><div class="pl-px text-[#ee1c1c]"><span data-w="58">-8.322 ns</span></div>
                    <div><span data-w="179">Number of Failing Endpoints:</span></div><div class="pl-px text-[#ee1c1c]">2</div>
                    <div><span data-w="172">Total Number of Endpoints:</span></div><div class="pl-px"><span data-w="31">2561</span></div>
                  </div>
                </div>
                <div class="w-[278px] shrink-0">
                  <div class="h-5 leading-[19px] font-bold border-b border-[#c8c8c8] mb-[5px]"><span data-w="85">Pulse Width</span></div>
                  <div class="pl-[21px] leading-[23px]">
                    <div><span data-w="205">Worst Pulse Width Slack (WPWS):</span></div>
                    <div><span data-w="204">Total Pulse Width Negative Slack</span></div>
                    <div><span data-w="179">Number of Failing Endpoints:</span></div>
                    <div><span data-w="172">Total Number of Endpoints:</span></div>
                  </div>
                </div>
              </div>
              <div class="w-[14px] bg-[#fdf9fd] border-l border-[#e4e4e4] flex flex-col items-center text-[#777]">
                <svg class="mt-[2px] w-3 h-3"><use href="#up"/></svg>
                <div class="mt-[11px] w-2 h-[38px] rounded-full bg-[#c3c1c4]"></div>
                <svg class="mt-auto w-3 h-3"><use href="#dn"/></svg>
              </div>
            </div>
            <div class="h-[14px] flex text-[#777]">
              <div class="flex-1 bg-[#fdf9fd] border-t border-[#e4e4e4] flex items-center pl-[2px] pr-[1px]"><svg class="w-3 h-3"><use href="#lt"/></svg><div class="ml-[3px] w-[675px] h-2 rounded-full bg-[#c3c1c4]"></div><svg class="ml-auto w-3 h-3"><use href="#rt"/></svg></div>
              <div class="w-[14px] bg-[#dcdcdc]"></div>
            </div>
          </div>
        </div>
        <div class="h-[26px] bg-[#f7f7f7] border-t border-dashed border-[#888] flex items-center">
          <div class="ml-[3px] w-[266px] h-[19px] border border-[#c6c6c6] bg-white pl-[7px] leading-[18px] font-bold"><span data-w="227">Timing Summary - impl_1 (saved)</span></div>
        </div>
      </section>
    </main>
  </div>
  <footer class="h-[19px] bg-[#eee]"></footer>
</div>
<svg class="absolute left-[1336px] top-[735px] w-6 h-6"><use href="#g"/></svg>

<script>
  // Spread each label's letters so that it takes its nominal width in pixels.
  function fitLabels() {
    var labels = Array.from(document.querySelectorAll('[data-w]'));
    labels.forEach(function (el) { el.style.letterSpacing = '0px'; });
    var widths = labels.map(function (el) {
      var range = document.createRange();
      range.selectNodeContents(el);
      return range.getBoundingClientRect().width;
    });
    labels.forEach(function (el, i) {
      el.style.letterSpacing = ((+el.dataset.w - widths[i]) / el.textContent.length).toFixed(3) + 'px';
    });
  }
  fitLabels();
  window.addEventListener('load', function () {
    fitLabels();
    requestAnimationFrame(fitLabels);
    setTimeout(fitLabels, 60);
  });
</script>
</body>
</html>
